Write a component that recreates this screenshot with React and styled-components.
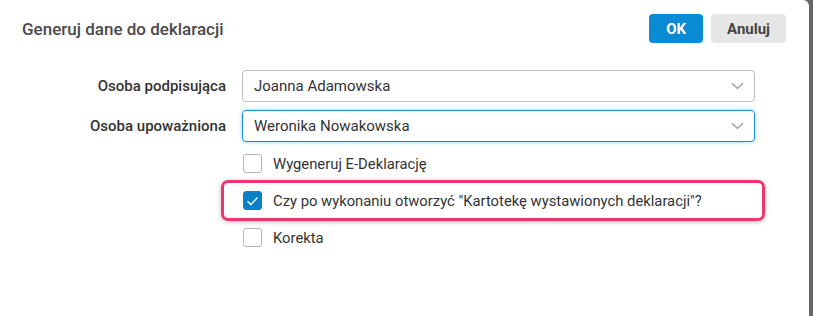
import React, { useState } from 'react';
import styled, { createGlobalStyle } from 'styled-components';

const GlobalStyle = createGlobalStyle`
  html, body {
    margin: 0;
    padding: 0;
    background: #676767;
    overflow: hidden;
  }
  body {
    font-family: Roboto, "Liberation Sans", Arial, sans-serif;
  }
`;

const Dialog = styled.div`
  width: 809px;
  height: 316px;
  background: #fff;
  border-top-right-radius: 6px;
  box-sizing: border-box;
`;

const Header = styled.div`
  display: flex;
  align-items: center;
  justify-content: space-between;
  padding: 14px 23px 0 22px;
  height: 29px;
`;

const Title = styled.h1`
  margin: 0;
  font-size: 17px;
  font-weight: 500;
  color: #4a4a4a;
`;

const Actions = styled.div`
  display: flex;
  gap: 8px;
`;

const ActionButton = styled.button`
  height: 29px;
  padding: 0 ${(p) => (p.$primary ? '17px' : '16px')};
  border: none;
  border-radius: 4px;
  font-family: inherit;
  font-size: 15px;
  font-weight: 700;
  background: ${(p) => (p.$primary ? '#0a8bd3' : '#e6e6e6')};
  color: ${(p) => (p.$primary ? '#fff' : '#444')};
  cursor: pointer;
`;

const Form = styled.div`
  display: grid;
  grid-template-columns: 226px 513px;
  column-gap: 16px;
  row-gap: 8px;
  margin-top: 27px;
  align-items: center;
`;

const Label = styled.label`
  text-align: right;
  font-size: 15px;
  font-weight: 500;
  color: #333;
`;

const SelectBox = styled.div`
  height: 32px;
  box-sizing: border-box;
  border: 1px solid ${(p) => (p.$focused ? '#1a8fd8' : '#bdbdbd')};
  border-radius: 4px;
  box-shadow: ${(p) => (p.$focused ? '0 0 4px rgba(26, 143, 216, 0.45)' : 'none')};
  display: flex;
  align-items: center;
  justify-content: space-between;
  padding: 0 10px 0 11px;
  font-size: 15px;
  color: #333;
`;

const Chevron = () => (
  <svg width="13" height="8" viewBox="0 0 13 8" fill="none">
    <path d="M1 1.2l5.5 5.3L12 1.2" stroke="#9a9a9a" strokeWidth="1.2" />
  </svg>
);

const Options = styled.div`
  grid-column: 2;
  display: flex;
  flex-direction: column;
  margin-top: -5px;
`;

const OptionRow = styled.label`
  position: relative;
  display: flex;
  align-items: center;
  gap: 11px;
  height: 37px;
  font-size: 14.8px;
  color: #333;
`;

const Box = styled.span`
  width: 19px;
  height: 19px;
  box-sizing: border-box;
  border-radius: 3px;
  border: 1px solid ${(p) => (p.$checked ? '#0a80c6' : '#b5b5b5')};
  background: ${(p) => (p.$checked ? '#0a80c6' : '#fff')};
  display: flex;
  align-items: center;
  justify-content: center;
  margin-left: 1px;
`;

const Highlight = styled.span`
  position: absolute;
  left: -21px;
  top: -2px;
  width: 544px;
  height: 41px;
  box-sizing: border-box;
  border: 3px solid #f0346c;
  border-radius: 7px;
  box-shadow: 0 1px 5px rgba(0, 0, 0, 0.25);
  pointer-events: none;
`;

const Check = () => (
  <svg width="13" height="10" viewBox="0 0 13 10" fill="none">
    <path d="M1.5 5.2l3.4 3.3L11.5 1.5" stroke="#fff" strokeWidth="1.3" />
  </svg>
);

const options = [
  { label: 'Wygeneruj E-Deklarację', checked: false },
  { label: 'Czy po wykonaniu otworzyć "Kartotekę wystawionych deklaracji"?', checked: true, marked: true },
  { label: 'Korekta', checked: false },
];

export default function App() {
  const [values, setValues] = useState(options.map((o) => o.checked));

  return (
    <>
      <GlobalStyle />
      <Dialog>
        <Header>
          <Title>Generuj dane do deklaracji</Title>
          <Actions>
            <ActionButton $primary>OK</ActionButton>
            <ActionButton>Anuluj</ActionButton>
          </Actions>
        </Header>
        <Form>
          <Label>Osoba podpisująca</Label>
          <SelectBox>
            Joanna Adamowska
            <Chevron />
          </SelectBox>
          <Label>Osoba upoważniona</Label>
          <SelectBox $focused>
            Weronika Nowakowska
            <Chevron />
          </SelectBox>
          <Options>
            {options.map((o, i) => (
              <OptionRow
                key={o.label}
                onClick={() => setValues(values.map((v, j) => (j === i ? !v : v)))}
              >
                <Box $checked={values[i]}>{values[i] && <Check />}</Box>
                {o.label}
                {o.marked && <Highlight />}
              </OptionRow>
            ))}
          </Options>
        </Form>
      </Dialog>
    </>
  );
}
